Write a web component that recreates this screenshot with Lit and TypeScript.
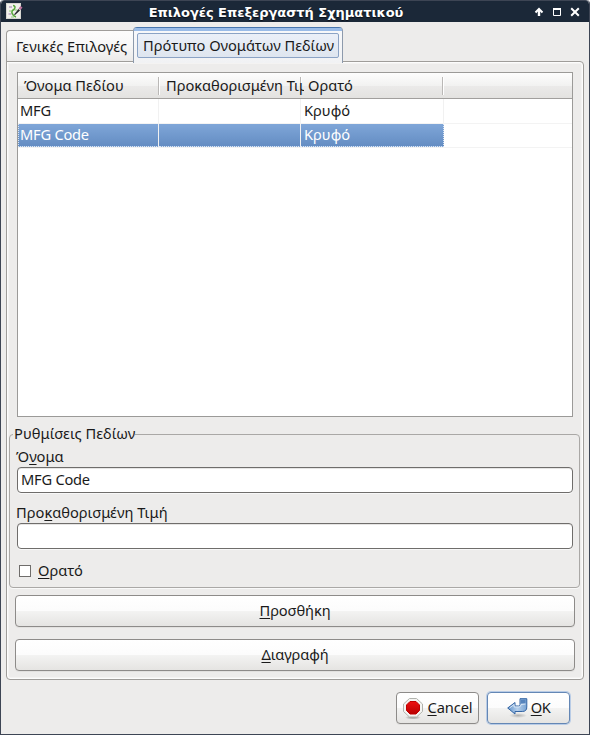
import { LitElement, html, css, svg } from "lit";
import { customElement, state } from "lit/decorators.js";
import { classMap } from "lit/directives/class-map.js";

interface FieldRow {
  name: string;
  value: string;
  visible: string;
}

@customElement("app-titlebar")
class AppTitlebar extends LitElement {
  static styles = css`
    :host {
      display: grid;
      grid-template-columns: 78px 1fr 58px;
      align-items: start;
      height: 22px;
      box-sizing: border-box;
      background: #1b2838;
      border-top: 1px solid #3d4554;
      border-radius: 4px 4px 0 0;
    }
    .title {
      text-align: center;
      color: #fff;
      font: bold 13px/20px "DejaVu Sans", sans-serif;
      letter-spacing: -0.030px;
      white-space: nowrap;
      padding-top: 2px;
      padding-right: 58px;
      text-shadow: 0 1px 1px #0a0f18;
    }
    .logo,
    .controls {
      display: block;
    }
    .logo {
      margin: 2px 0 0 5px;
    }
  `;
  render() {
    return html`
      <svg class="logo" width="18" height="18" viewBox="0 0 18 18">
        <rect x="0.5" y="0.5" width="14" height="15" fill="#f1f0ec" stroke="#d5d5d0" />
        <path d="M3 4h3M2.500 11h3" stroke="#b9a7c4" stroke-width="1.500" />
        <path d="M7 2.500Q10 3 8.500 6Q5 8 6 10Q7 13 10 14" fill="none" stroke="#59a83c" stroke-width="1.500" />
        <path d="M3 8h3M8.500 7h3M5 14h3" stroke="#91ca7c" />
        <path d="M8 11.500l4.500-5.500 1.500 1.500-5 4.500z" fill="#25282a" />
        <path d="M12.500 5.500l2-2.500 2 1.500-2 2.500z" fill="#b9719b" />
      </svg>
      <div class="title">Επιλογές Επεξεργαστή Σχηματικού</div>
      <svg class="controls" width="58" height="20" viewBox="0 0 58 20">
        <g fill="none" stroke="#fff" stroke-width="2">
          <path d="M8 15V9" stroke-width="2.400" />
          <path d="M4.500 11.500L8 8L11.500 11.500" />
          <path d="M22.500 8.500h7v6h-7z" stroke-width="1" />
          <path d="M22 8h8" />
          <path d="M40.200 7.200l7.600 7.600M47.800 7.200l-7.600 7.600" />
        </g>
      </svg>
    `;
  }
}

@customElement("field-list")
class FieldList extends LitElement {
  @state() rows: FieldRow[] = [
    { name: "MFG", value: "", visible: "Κρυφό" },
    { name: "MFG Code", value: "", visible: "Κρυφό" },
  ];
  @state() selected = 1;

  static styles = css`
    :host {
      display: block;
      box-sizing: border-box;
      height: 345px;
      border: 1px solid #9b9a98;
      background: #fff;
      color: #1a1a1a;
    }
    .head {
      display: grid;
      grid-template-columns: 142px 142px 142px 1fr;
      height: 25px;
      border-bottom: 1px solid #a19f9d;
      background: linear-gradient(#fdfdfd, #f2f2f1 50%, #ebeae9 52%, #e3e2e0);
    }
    .head div {
      position: relative;
      padding-left: 6px;
      line-height: 25px;
      white-space: nowrap;
    }
    .head span {
      display: block;
      position: relative;
      z-index: 1;
      width: calc(100% + 2px);
      overflow: hidden;
      letter-spacing: -0.030px;
    }
    .head div:not(:last-child)::after {
      content: "";
      position: absolute;
      right: 0;
      top: 4px;
      width: 1px;
      height: 18px;
      background: #bab8b6;
      border-right: 1px solid #fff;
    }
    .row {
      display: grid;
      grid-template-columns: 141px 142px 143px 1fr;
      height: 24px;
      line-height: 22px;
      border-bottom: 1px solid #f3f3f3;
      box-sizing: border-box;
    }
    .row div {
      padding-left: 2px;
      border-right: 1px solid #f1f1f1;
      box-sizing: border-box;
      white-space: nowrap;
    }
    .row div:first-child {
      letter-spacing: -0.250px;
    }
    .row div:nth-child(3) {
      padding-left: 3px;
    }
    .row div:last-child {
      border: 0;
    }
    .row.first {
      height: 25px;
    }
    .row.on div:not(:last-child) {
      height: 23px;
      color: #fff;
      background: linear-gradient(#7fa6d8, #648dc3);
      border-bottom: 1px dotted #dce6f3;
      line-height: 20px;
    }
    .row.on div:first-child {
      border-left: 1px dotted #dce6f3;
      padding-left: 1px;
    }
    .row.on div:nth-child(3) {
      border-right: 1px dotted #dce6f3;
    }
  `;
  render() {
    return html`
      <div class="head">
        <div>Όνομα Πεδίου</div>
        <div><span>Προκαθορισμένη Τιμή</span></div>
        <div>Ορατό</div>
        <div></div>
      </div>
      ${this.rows.map(
        (r, i) => html`<div
          class=${classMap({ row: true, first: i === 0, on: i === this.selected })}
          @click=${() => (this.selected = i)}
        >
          <div>${r.name}</div>
          <div>${r.value}</div>
          <div>${r.visible}</div>
          <div></div>
        </div>`
      )}
    `;
  }
}

const stopIcon = svg`
  <defs>
    <radialGradient id="shade"><stop offset="0.3" stop-color="#000" stop-opacity="0.3"/><stop offset="1" stop-color="#000" stop-opacity="0"/></radialGradient>
    <linearGradient id="red" x2="0" y2="1"><stop stop-color="#e11"/><stop offset="1" stop-color="#b90000"/></linearGradient>
  </defs>
  <ellipse cx="10" cy="19.500" rx="8" ry="2" fill="url(#shade)"/>
  <path d="M6.500 0.500h7l6 5.500v7.500l-6 5.500h-7l-6-5.500v-7.500z" fill="#f4f4f2" stroke="#b1b3ad"/>
  <path d="M7 3.500h6l3.500 3.500v5.500l-3.500 3.500h-6l-3.500-3.500v-5.500z" fill="url(#red)" stroke="#c00000"/>`;

const okIcon = svg`
  <defs>
    <radialGradient id="glow"><stop stop-color="#000" stop-opacity="0.25"/><stop offset="1" stop-color="#000" stop-opacity="0"/></radialGradient>
    <linearGradient id="blue"><stop stop-color="#5f91ca"/><stop offset="0.5" stop-color="#b5cfeb"/><stop offset="1" stop-color="#78a3d3"/></linearGradient>
  </defs>
  <ellipse cx="11" cy="17.500" rx="9" ry="2.500" fill="url(#glow)"/>
  <path d="M0.700 10l7.300-5.500v3.500h3.500q1.500 0 1.500-1.500v-5.800h6.800v8.300q0 4.500-4.500 4.500h-7.300v2.500z" fill="url(#blue)" stroke="#3465a4" stroke-linejoin="round"/>
  <path d="M14 1.500h4.500v4h-4.500z" fill="#5684bd"/>
  <path d="M2.500 10l4.600-3.500v2.500h5q1.900-.3 1.900-2.500l4.500-.5" fill="none" stroke="#d8e6f5"/>`;

@customElement("app-root")
class AppRoot extends LitElement {
  static styles = css`
    :host {
      display: block;
      height: 735px;
      background: #fff;
      font: 14.67px/20px "Noto Sans", sans-serif;
      color: #1a1a1a;
    }
    .window {
      height: 735px;
      box-sizing: border-box;
      border: solid #3d4554;
      border-width: 0 1px 1px;
      border-radius: 4px 4px 0 0;
      background: #edeceb;
      overflow: hidden;
    }
    .tabs {
      display: flex;
      align-items: flex-end;
      height: 40px;
      padding-left: 5px;
      position: relative;
      z-index: 1;
      white-space: nowrap;
    }
    .tab {
      box-sizing: border-box;
      width: 127px;
      height: 32px;
      padding-left: 9px;
      line-height: 31px;
      border: 1px solid #9f9d9a;
      border-right: 0;
      border-radius: 4px 0 0 0;
      background: linear-gradient(#fcfcfc, #f8f8f8 45%, #ebeae9);
    }
    .tab.active {
      width: 210px;
      height: 36px;
      margin-bottom: -1px;
      padding: 2px 3px 4px;
      border: 1px solid #8d9aac;
      border-top: 0;
      border-bottom: 0;
      border-radius: 4px 4px 0 0;
      background: linear-gradient(#4775ad 1px, #9abce8 1px, #9abce8 4px, #f7f8fa 4px, #f1f2f4);
    }
    .focus {
      margin-top: 4px;
      height: 25px;
      box-sizing: border-box;
      border: 1px solid #8ba3c5;
      border-radius: 2px;
      background: linear-gradient(#ebf0f8, #dee5ef);
      padding-left: 5px;
      line-height: 22px;
    }
    .page {
      margin: -1px 5px 0;
      height: 619px;
      box-sizing: border-box;
      border: 1px solid #9f9d9a;
      border-radius: 0 4px 4px 4px;
      box-shadow: inset 0 0 0 1px #fcfcfc, inset 0 0 0 2px #f4f3f2;
      padding: 10px 3px 0 2px;
    }
    field-list {
      margin: 0 7px 0 8px;
    }
    .group {
      height: 154px;
      margin-top: 17px;
      box-sizing: border-box;
      border: 1px solid #aaa8a6;
      border-radius: 4px;
      padding: 0 6px 0 7px;
      box-shadow: 0 1px #f9f9f9;
    }
    .legend {
      display: table;
      margin: -11px 0 0 -4px;
      padding-left: 1px;
      height: 22px;
      line-height: 19px;
      letter-spacing: 0.030px;
      background: #edeceb;
      white-space: nowrap;
    }
    .label {
      height: 21px;
      line-height: 20px;
      margin-left: -1px;
    }
    .label.second {
      margin-top: 9px;
    }
    .input {
      height: 26px;
      box-sizing: border-box;
      border: 1px solid #6f6d6b;
      border-radius: 4px;
      background: #fff;
      box-shadow: 0 1px #f8f8f8, inset 0 1px #e6e5e4;
      padding-left: 3px;
      line-height: 23px;
      letter-spacing: -0.250px;
    }
    .check {
      display: flex;
      align-items: center;
      gap: 7px;
      margin: 11px 0 0 2px;
      height: 22px;
    }
    .check span {
      margin-top: -2px;
    }
    .box {
      width: 12px;
      height: 12px;
      box-sizing: border-box;
      border: 1px solid #6f6d6b;
      background: #fff;
    }
    u {
      text-decoration: underline 1px;
      text-underline-offset: 2px;
      text-decoration-skip-ink: none;
    }
    .button {
      box-sizing: border-box;
      height: 32px;
      display: flex;
      align-items: center;
      justify-content: center;
      border: 1px solid #8d8b89;
      border-radius: 4px;
      background: linear-gradient(#fff, #fcfcfc 49%, #f3f3f2 51%, #e5e4e2);
      box-shadow: 0 1px #e2e1df;
    }
    .button span {
      margin-top: -2px;
      letter-spacing: -0.100px;
    }
    .wide {
      margin: 7px 5px 0 6px;
    }
    .wide + .wide {
      margin-top: 12px;
    }
    .actions {
      display: flex;
      justify-content: flex-end;
      gap: 8px;
      padding: 12px 19px 0 0;
    }
    .actions .button {
      width: 83px;
      gap: 4px;
    }
    .actions .default {
      gap: 3px;
      border-color: #6487b5;
      box-shadow: 0 0 0 1px #b9cce6;
    }
    .actions .default span {
      letter-spacing: -0.500px;
    }
    .actions svg {
      display: block;
    }
    .actions .stop {
      margin: 2px -1px 0 1px;
    }
  `;
  render() {
    return html`
      <div class="window">
        <app-titlebar></app-titlebar>
        <div class="tabs">
          <div class="tab"><span>Γενικές Επιλογές</span></div>
          <div class="tab active"><div class="focus"><span>Πρότυπο Ονομάτων Πεδίων</span></div></div>
        </div>
        <div class="page">
          <field-list></field-list>
          <div class="group">
            <div class="legend">Ρυθμίσεις Πεδίων</div>
            <div class="label">Ό<u>ν</u>ομα</div>
            <div class="input">MFG Code</div>
            <div class="label second">Προ<u>κ</u>αθορισμένη Τιμή</div>
            <div class="input"></div>
            <div class="check"><div class="box"></div><span><u>Ο</u>ρατό</span></div>
          </div>
          <div class="button wide"><span><u>Π</u>ροσθήκη</span></div>
          <div class="button wide"><span><u>Δ</u>ιαγραφή</span></div>
        </div>
        <div class="actions">
          <div class="button">
            <svg class="stop" width="21" height="22" viewBox="0 0 21 22">${stopIcon}</svg>
            <span><u>C</u>ancel</span>
          </div>
          <div class="button default">
            <svg width="21" height="20" viewBox="0 0 21 20">${okIcon}</svg>
            <span><u>O</u>K</span>
          </div>
        </div>
      </div>
    `;
  }
}
